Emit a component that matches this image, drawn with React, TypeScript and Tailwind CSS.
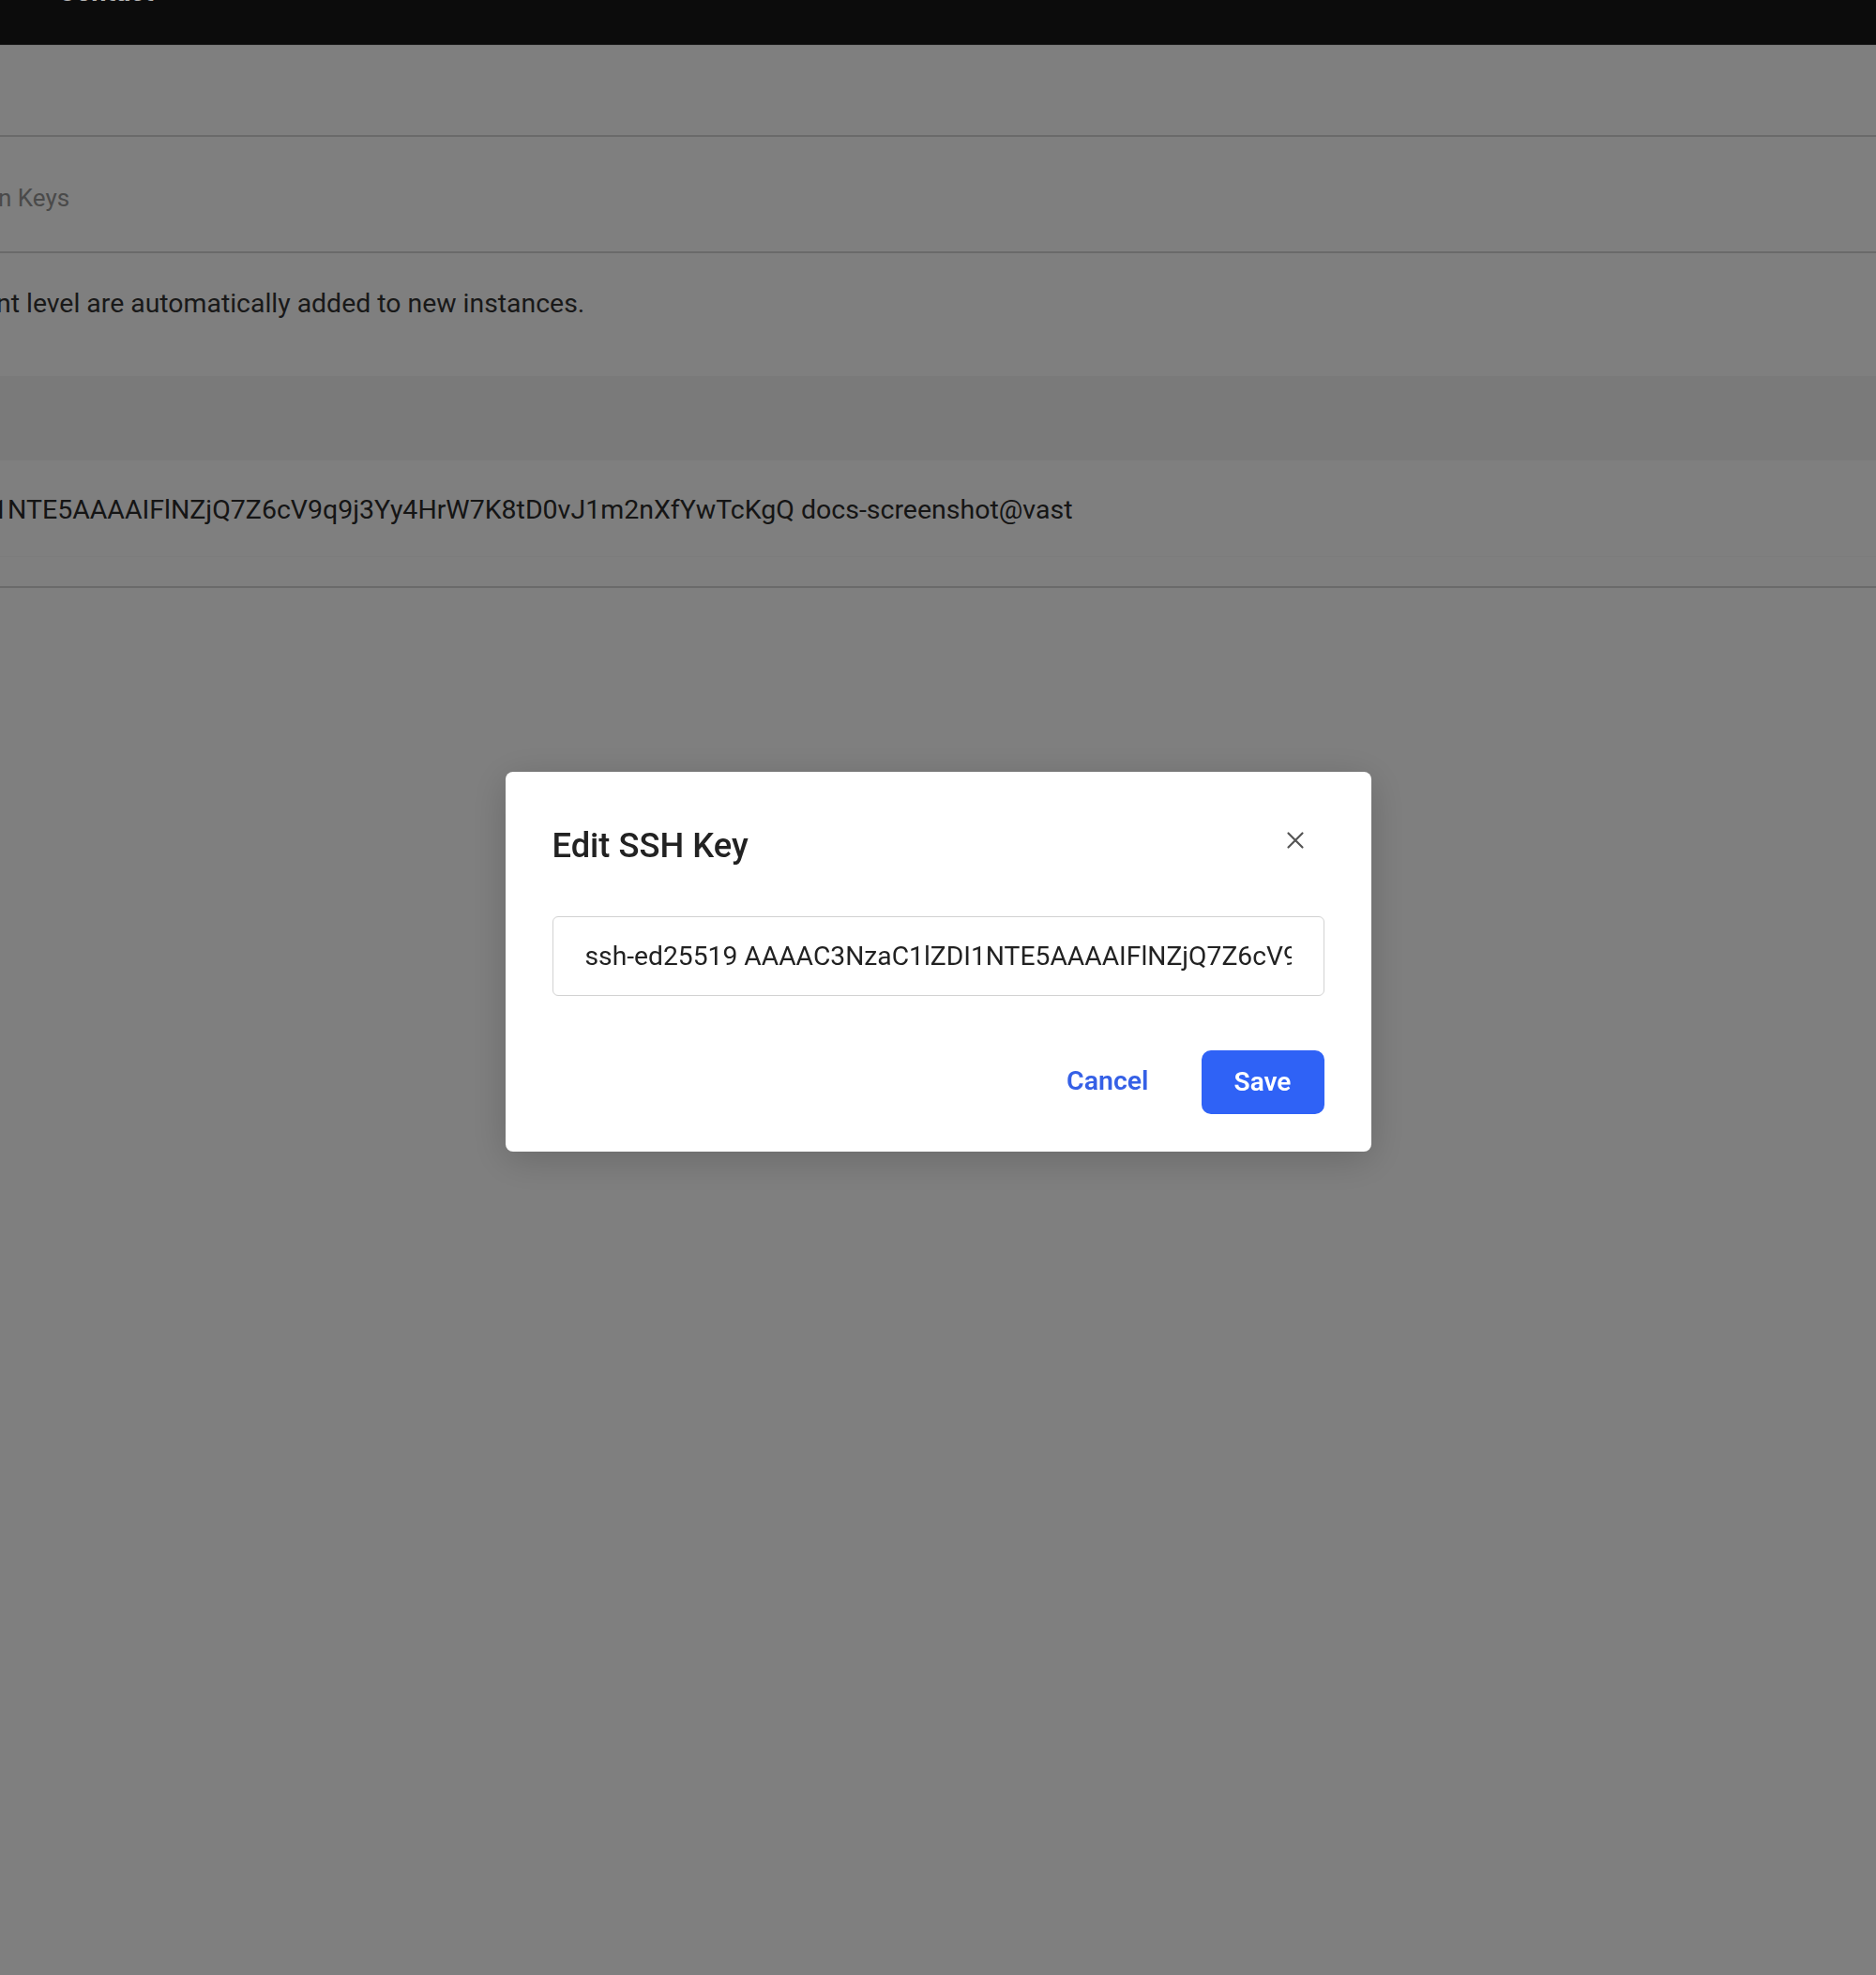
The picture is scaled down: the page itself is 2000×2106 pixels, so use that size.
import React, { useState } from 'react';

const KEY_VALUE =
  'ssh-ed25519 AAAAC3NzaC1lZDI1NTE5AAAAIFlNZjQ7Z6cV9q9j3Yy4HrW7K8tD0vJ1m2nXfYwTcKgQ docs-screenshot@vast';

const CloseIcon: React.FC = () => (
  <svg width="20" height="20" viewBox="0 0 20 20" fill="none" stroke="#555" strokeWidth="2.2" strokeLinecap="round">
    <path d="M2.5 2.5 L17.5 17.5 M17.5 2.5 L2.5 17.5" />
  </svg>
);

export default function App() {
  const [value, setValue] = useState(KEY_VALUE);

  return (
    <div className="relative min-h-[2106px] w-full overflow-hidden bg-white font-['Roboto',sans-serif]">
      {/* top navigation, sits above the backdrop */}
      <header className="relative z-20 h-[48px] border-b border-[#1f1f1f] bg-[#0c0c0c]">
        <span className="absolute left-[62px] top-[-27px] text-[29px] font-bold leading-[36px] text-[#b4b4b4]">Contact</span>
      </header>

      {/* page underneath */}
      <main className="text-[#2a2a2a]">
        <div className="h-[98px] border-b-2 border-[#d4d4d4]" />
        <div className="flex h-[124px] items-center border-b-2 border-[#d4d4d4] pt-[8px]">
          <span className="ml-[-2px] text-[26px] text-[#949494]">n Keys</span>
        </div>
        <div className="flex h-[131px] items-start pt-[33px]">
          <p className="ml-[-4px] text-[28.4px] leading-[42px] text-[#333]">nt level are automatically added to new instances.</p>
        </div>
        <div className="h-[90px] bg-[#f4f4f4]" />
        <div className="flex h-[103px] items-center border-b border-[#f9f9f9] pt-[4px]">
          <span className="ml-[-8px] whitespace-nowrap text-[28.5px] text-[#2a2a2a]">
            1NTE5AAAAIFlNZjQ7Z6cV9q9j3Yy4HrW7K8tD0vJ1m2nXfYwTcKgQ docs-screenshot@vast
          </span>
        </div>
        <div className="h-[33px] border-b-2 border-[#d4d4d4]" />
      </main>

      {/* backdrop + dialog */}
      <div className="fixed inset-0 z-10 flex items-center justify-center bg-black/50" role="dialog" aria-modal="true">
        <div className="mb-[56px] w-[923px] rounded-[8px] bg-white px-[50px] pb-[40px] pt-[58px] shadow-[0_8px_40px_rgba(0,0,0,0.18)]">
          <div className="flex items-start justify-between">
            <h2 className="text-[36.3px] font-medium leading-[42px] text-[#222]">Edit SSH Key</h2>
            <button type="button" className="mr-[19px] mt-[3px] flex h-[24px] w-[24px] items-center justify-center">
              <CloseIcon />
            </button>
          </div>

          <input
            type="text"
            value={value}
            onChange={(e) => setValue(e.target.value)}
            className="mt-[54px] block h-[85px] w-full rounded-[6px] border-[1.5px] border-[#d2d2d2] px-[34px] text-[28.25px] text-[#222] focus:outline-none"
          />

          <div className="mt-[58px] flex items-center justify-end gap-[34px]">
            <button type="button" className="px-[22px] text-[28.5px] font-semibold text-[#3560e6]">
              Cancel
            </button>
            <button type="button" className="h-[68px] w-[131px] rounded-[10px] bg-[#2f62f6] text-[28px] font-semibold text-white">
              Save
            </button>
          </div>
        </div>
      </div>
    </div>
  );
}
